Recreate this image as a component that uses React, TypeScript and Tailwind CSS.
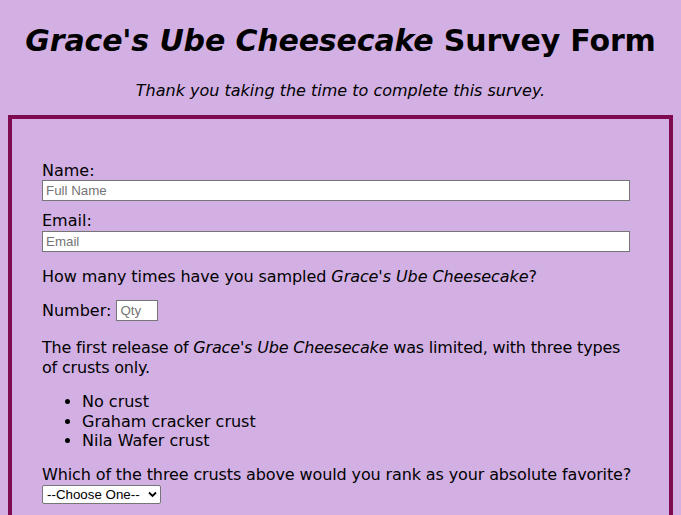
import React from "react";

const inputCls =
  "block h-[21px] w-[588px] border border-[#767676] bg-white px-[3px] py-0 text-[13.33px] leading-[normal] font-['Liberation_Sans',sans-serif] placeholder:text-[#757575] outline-none";

export default function App() {
  return (
    <div className="min-h-[515px] bg-[#d3b0e4] px-[8px] pb-[8px] pt-[1px] text-black font-['DejaVu_Sans',sans-serif]">
      <h1 className="mt-[20px] whitespace-nowrap text-center text-[30px] leading-[39px] font-bold tracking-[-0.15px]">
        <em>Grace's Ube Cheesecake</em> Survey Form
      </h1>
      <p className="mt-[21px] text-center text-[16px] leading-[19.5px] italic">
        Thank you taking the time to complete this survey.
      </p>
      <div className="mt-[14px] border-4 border-[#7e0b50] px-[30px] pt-[42px] pb-[30px] text-[16px] leading-[19.5px]">
        <label className="block">Name:</label>
        <input type="text" placeholder="Full Name" className={inputCls} />
        <label className="mt-[10px] block">Email:</label>
        <input type="email" placeholder="Email" className={inputCls} />
        <p className="mt-[15px] tracking-[-0.08px]">
          How many times have you sampled <em>Grace's Ube Cheesecake</em>?
        </p>
        <div className="mt-[14px] flex h-[21px] items-center">
          <span>Number:</span>
          <input
            type="text"
            placeholder="Qty"
            className="ml-[5px] h-[21px] w-[42px] border border-[#767676] bg-white px-[3px] py-0 text-[13.33px] leading-[normal] font-['Liberation_Sans',sans-serif] placeholder:text-[#757575] outline-none"
          />
        </div>
        <p className="mt-[17px] w-[597px] tracking-[-0.18px]">
          The first release of <em>Grace's Ube Cheesecake</em> was limited, with three types of crusts only.
        </p>
        <ul className="mt-[15px] list-disc pl-[40px]">
          <li>No crust</li>
          <li>Graham cracker crust</li>
          <li>Nila Wafer crust</li>
        </ul>
        <p className="mt-[14px] whitespace-nowrap tracking-[-0.12px]">
          Which of the three crusts above would you rank as your absolute favorite?
        </p>
        <div className="relative mt-[1px] h-[19px] w-[119px]">
          <select className="block h-[19px] w-[119px] appearance-none rounded-[2px] border border-[#767676] bg-white py-0 pl-[4px] pr-[18px] text-[13.33px] leading-[normal] text-black font-['Liberation_Sans',sans-serif] outline-none">
            <option>--Choose One--</option>
            <option>No crust</option>
            <option>Graham cracker crust</option>
            <option>Nila Wafer crust</option>
          </select>
          <svg
            className="pointer-events-none absolute right-[4px] top-[6px]"
            width="9"
            height="7"
            viewBox="0 0 9 7"
          >
            <path d="M1 1.5 L4.5 5 L8 1.5" fill="none" stroke="#000" strokeWidth="1.8" />
          </svg>
        </div>
      </div>
    </div>
  );
}
